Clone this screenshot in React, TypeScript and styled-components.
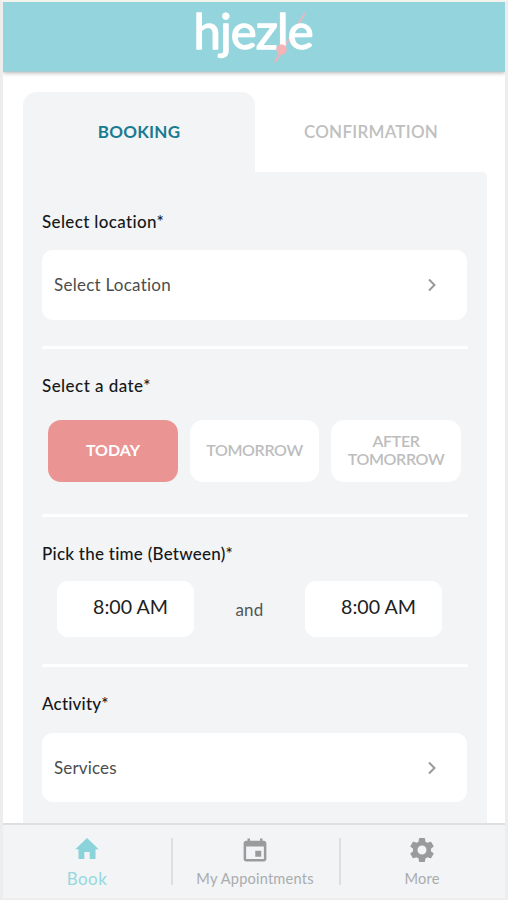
import React from 'react';
import styled, { createGlobalStyle } from 'styled-components';

const Global = createGlobalStyle`
  * { box-sizing: border-box; }
  body { margin: 0; background: #f1f2f2; font-family: Lato, "Open Sans", sans-serif; }
  button { font-family: inherit; border: 0; padding: 0; }
`;

const Screen = styled.div`
  width: 508px;
  height: 900px;
  display: flex;
  flex-direction: column;
  overflow: hidden;
  background: #fff;
  border: solid #ededee;
  border-width: 2px 3px 2px 3px;
  border-top-color: #f5f3ee;
`;

const Header = styled.header`
  height: 70px;
  flex: none;
  background: #94d5dd;
  border-bottom: 1px solid #a9cdd2;
  box-shadow: 0 1px 4px rgba(0, 0, 0, 0.3);
  display: flex;
  justify-content: center;
`;

const Logo = styled.svg`
  width: 140px;
  height: 69px;
  display: block;
  font-size: 49px;
`;

const Content = styled.main`
  flex: 1;
  min-height: 0;
  overflow: hidden;
  padding: 20px 18px 0 20px;
`;

const Tabs = styled.nav`
  display: grid;
  grid-template-columns: 232px 1fr;
  height: 80px;
`;

const Tab = styled.button<{ $active?: boolean }>`
  height: 80px;
  padding-bottom: 2px;
  background: ${p => (p.$active ? '#f2f4f6' : '#fff')};
  color: ${p => (p.$active ? '#197b92' : '#bfbfbf')};
  border-radius: 14px 14px 0 0;
  font-size: 17px;
  font-weight: ${p => (p.$active ? 700 : 600)};
  letter-spacing: 0.25px;
`;

const Panel = styled.section`
  width: 464px;
  height: 660px;
  padding: 13px 20px 0 19px;
  background: #f2f4f6;
  border-radius: 0 5px 0 0;
`;

const Group = styled.section<{ $height: number }>`
  height: ${p => p.$height}px;
  padding-top: 25px;
`;

const Label = styled.h2<{ $spacing: number }>`
  margin: 0;
  height: 24px;
  line-height: 24px;
  font-size: 17px;
  font-weight: 500;
  color: #161819;
  letter-spacing: ${p => p.$spacing}px;
  white-space: nowrap;
`;

const Field = styled.button<{ $height: number; $gap: number; $spacing: number }>`
  margin-top: ${p => p.$gap}px;
  width: 425px;
  height: ${p => p.$height}px;
  display: flex;
  align-items: center;
  justify-content: space-between;
  padding: 0 29px 1px 12px;
  border-radius: 11px;
  background: #fff;
  color: #4c4c4c;
  font-size: 17px;
  letter-spacing: ${p => p.$spacing}px;
`;

const Chevron = styled.svg`
  width: 12px;
  height: 16px;
  margin-top: 1px;
  fill: none;
  stroke: #999;
  stroke-width: 2;
`;

const Divider = styled.hr`
  width: 426px;
  height: 3px;
  margin: 0;
  border: 0;
  border-radius: 2px;
  background: #fff;
`;

const Dates = styled.div`
  display: grid;
  grid-template-columns: 130px 129px 130px;
  gap: 12px;
  padding: 22px 6px 0;
`;

const DateButton = styled.button<{ $active?: boolean }>`
  height: 62px;
  border-radius: 13px;
  padding-bottom: 2px;
  background: ${p => (p.$active ? '#ea9594' : '#fff')};
  color: ${p => (p.$active ? '#fff' : '#bdbdbd')};
  font-size: 16px;
  line-height: 18px;
  font-weight: ${p => (p.$active ? 700 : 600)};
  letter-spacing: ${p => (p.$active ? '0' : '-0.35px')};
  white-space: pre-line;
`;

const Times = styled.div`
  display: grid;
  grid-template-columns: 137px 111px 137px;
  padding: 15px 0 0 15px;
`;

const TimeBox = styled.button`
  height: 56px;
  padding: 0 0 5px 10px;
  border-radius: 11px;
  background: #fff;
  color: #222;
  font-size: 19.6px;
  line-height: 24px;
`;

const And = styled.span`
  text-align: center;
  line-height: 57px;
  font-size: 17px;
  letter-spacing: 0.2px;
  color: #555;
`;

const BottomNav = styled.nav`
  height: 75px;
  flex: none;
  display: grid;
  grid-template-columns: 168px 2px 166px 2px 1fr;
  align-items: start;
  background: #f2f4f6;
  border-top: 2px solid #dedfe1;
`;

const NavItem = styled.button<{ $active?: boolean }>`
  height: 73px;
  background: none;
  display: flex;
  flex-direction: column;
  align-items: center;
  padding: 10px ${p => (p.$active ? 0 : 2)}px 0 0;
  color: ${p => (p.$active ? '#94d9df' : '#aaacad')};
  font-size: ${p => (p.$active ? '17px' : '14.6px')};
  letter-spacing: ${p => (p.$active ? '0.4px' : '0.2px')};
  line-height: 20px;
`;

const NavIcon = styled.svg<{ $active?: boolean }>`
  width: ${p => (p.$active ? 28 : 30)}px;
  height: ${p => (p.$active ? 28 : 30)}px;
  margin-bottom: ${p => (p.$active ? 6 : 4)}px;
  fill: ${p => (p.$active ? '#8ad3da' : '#999b9c')};
`;

const Separator = styled.span`
  margin-top: 13px;
  height: 47px;
  background: #dddfe1;
`;

const Arrow = () => (
  <Chevron viewBox="0 0 12 16"><path d="m3 2.500 5.500 5.500L3 13.500" /></Chevron>
);

export default function App() {
  return (
    <>
      <Global />
      <Screen>
        <Header>
          <Logo viewBox="184 2 140 69" role="img" aria-label="hjezle">
            <path d="M305 13 275 62" stroke="#e6b8bf" strokeWidth="2" />
            <text x="193.500" y="49" fill="#fff" stroke="#fff" strokeWidth="1.300" strokeLinejoin="round" textLength="120" lengthAdjust="spacing">hjezle</text>
            <circle cx="281.500" cy="49.500" r="5.200" fill="#f4b4b6" />
            <path d="m280 54-5 8" stroke="#eab4ba" strokeWidth="2" />
          </Logo>
        </Header>
        <Content>
          <Tabs>
            <Tab $active>BOOKING</Tab>
            <Tab>CONFIRMATION</Tab>
          </Tabs>
          <Panel>
            <Group $height={161}>
              <Label $spacing={0.35}>Select location*</Label>
              <Field $height={70} $gap={16} $spacing={0.25}>Select Location<Arrow /></Field>
            </Group>
            <Divider />
            <Group $height={165}>
              <Label $spacing={0.45}>Select a date*</Label>
              <Dates>
                <DateButton $active>TODAY</DateButton>
                <DateButton>TOMORROW</DateButton>
                <DateButton>{'AFTER\nTOMORROW'}</DateButton>
              </Dates>
            </Group>
            <Divider />
            <Group $height={147}>
              <Label $spacing={0.25}>Pick the time (Between)*</Label>
              <Times>
                <TimeBox>8:00 AM</TimeBox>
                <And>and</And>
                <TimeBox>8:00 AM</TimeBox>
              </Times>
            </Group>
            <Divider />
            <Group $height={158}>
              <Label $spacing={0.2}>Activity*</Label>
              <Field $height={69} $gap={17} $spacing={0.15}>Services<Arrow /></Field>
            </Group>
          </Panel>
        </Content>
        <BottomNav>
          <NavItem $active>
            <NavIcon $active viewBox="0 0 24 24"><path d="M9.700 20.500v-6h4.600v6h5v-8.200H22L12 2.600 2 12.300h2.700v8.200z" /></NavIcon>
            Book
          </NavItem>
          <Separator />
          <NavItem>
            <NavIcon viewBox="0 0 24 24"><path d="M17 12.500h-4.800v4.800H17zM16 2.700v1.800H8V2.700H6v1.800H4.900c-1.100 0-2 .9-2 2v12.700c0 1.100.9 2 2 2h14.200c1.100 0 2-.9 2-2V6.500c0-1.100-.9-2-2-2H18V2.700zM19.100 19.200H4.900V9.200h14.200z" /></NavIcon>
            My Appointments
          </NavItem>
          <Separator />
          <NavItem>
            <NavIcon viewBox="0 0 24 24"><path d="M19.140 12.940c.040-.3.060-.61.060-.94 0-.32-.020-.64-.070-.94l2.030-1.580c.18-.14.23-.41.120-.61l-1.920-3.320c-.120-.22-.37-.29-.59-.22l-2.390.96c-.5-.38-1.030-.7-1.620-.94l-.36-2.540c-.040-.24-.24-.41-.48-.41h-3.840c-.24 0-.43.17-.47.41l-.36 2.540c-.59.24-1.130.57-1.620.94l-2.390-.96c-.22-.080-.47 0-.59.22L2.740 8.870c-.120.21-.080.47.120.61l2.030 1.580c-.050.3-.090.63-.090.94s.020.64.070.94l-2.030 1.580c-.18.14-.23.41-.120.61l1.920 3.320c.120.22.37.29.59.22l2.390-.96c.5.38 1.030.7 1.620.94l.36 2.540c.050.24.24.41.48.41h3.840c.24 0 .44-.17.47-.41l.36-2.540c.59-.24 1.130-.56 1.620-.94l2.390.96c.22.080.47 0 .59-.22l1.920-3.320c.120-.22.070-.47-.120-.61zM12 15.600a3.600 3.600 0 1 1 0-7.200 3.600 3.600 0 0 1 0 7.200z" /></NavIcon>
            More
          </NavItem>
        </BottomNav>
      </Screen>
    </>
  );
}
